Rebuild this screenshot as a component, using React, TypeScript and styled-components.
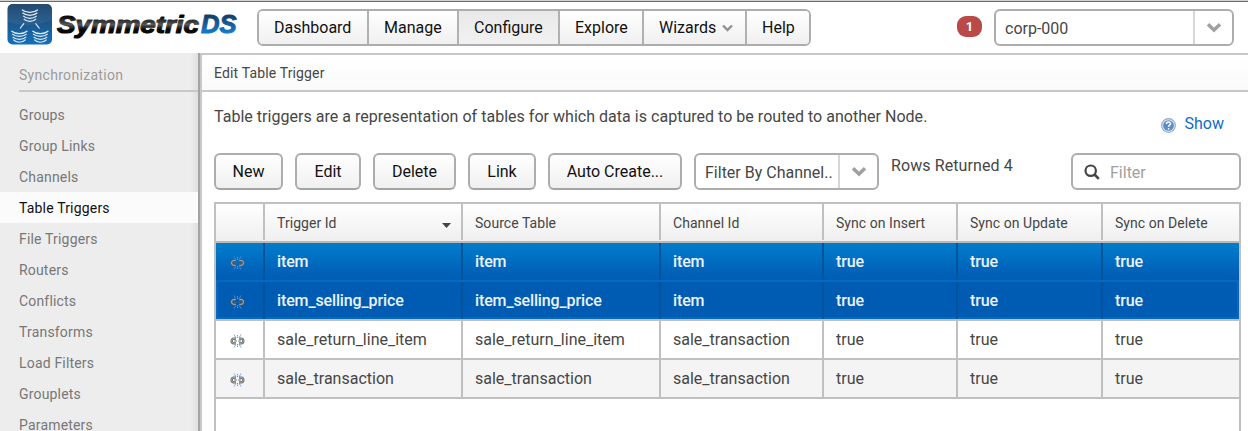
import React from "react";
import styled, { createGlobalStyle, css } from "styled-components";

const GlobalStyle = createGlobalStyle`
  * { box-sizing: border-box; }
  html, body { margin: 0; padding: 0; background: #fff; }
  body {
    font-family: Roboto, "Liberation Sans", sans-serif;
    font-size: 16px;
    color: #464646;
    overflow: hidden;
  }
`;

const Page = styled.div`
  width: 1248px;
  height: 431px;
  display: flex;
  flex-direction: column;
  overflow: hidden;
`;

const TopBar = styled.header`
  flex: none;
  height: 53px;
  display: flex;
  align-items: flex-start;
  padding: 7px 14px 0 7px;
  border-top: 1px solid #d2d2d2;
  box-shadow: inset 0 1px 0 #6c6c6c;
`;

const Logo = styled.svg`
  flex: none;
  display: block;
  width: 236px;
  height: 44px;
  margin: -5px 14px 0 0;
`;

const surface = css`
  border: 2px solid #adadad;
  border-radius: 6px;
  background: #fff;
`;

const Menu = styled.nav`
  ${surface}
  display: flex;
  height: 37px;
  margin-top: 1px;
  overflow: hidden;
`;

const MenuItem = styled.div<{ $width: number; $active?: boolean }>`
  width: ${(p) => p.$width}px;
  display: flex;
  align-items: center;
  padding: 0 0 1px 15px;
  white-space: nowrap;
  color: #111;
  background: ${(p) => (p.$active ? "linear-gradient(#e9e9e9, #f1f1f1)" : "linear-gradient(#fff, #f0f0f0)")};
  & + & { border-left: 2px solid #b1b1b1; }
`;

const MenuArrow = styled.svg`
  width: 11px;
  height: 8px;
  margin: 1px 0 0 6px;
`;

const Badge = styled.span`
  width: 25px;
  height: 21px;
  margin: 8px 12px 0 auto;
  border-radius: 9px;
  background: #b94a48;
  color: #fff;
  font-size: 13px;
  font-weight: 700;
  line-height: 22px;
  text-align: center;
`;

const SelectBox = styled.div<{ $width: number; $top?: number }>`
  ${surface}
  flex: none;
  width: ${(p) => p.$width}px;
  height: 37px;
  margin-top: ${(p) => p.$top || 0}px;
  display: flex;
  overflow: hidden;
`;

const SelectValue = styled.div`
  flex: 1;
  padding: 3px 0 0 9px;
  line-height: 30px;
  white-space: nowrap;
  overflow: hidden;
`;

const SelectButton = styled.div`
  width: 39px;
  border-left: 2px solid #d6d6d6;
  display: flex;
  align-items: center;
  justify-content: center;
`;

const Body = styled.div`
  flex: 1;
  min-height: 0;
  display: flex;
`;

const Sidebar = styled.aside`
  flex: none;
  width: 200px;
  border-right: 2px solid #a3a3a3;
  background: linear-gradient(to right, #ededed 190px, #e0e0e0 198px);
`;

const SideTitle = styled.div`
  height: 39px;
  margin: 0 0 7px 19px;
  padding-top: 6px;
  line-height: 32px;
  font-size: 14px;
  letter-spacing: 0.3px;
  color: #9b9b9b;
  border-bottom: 2px solid #c8c8c8;
`;

const SideItem = styled.div<{ $active?: boolean }>`
  height: 31px;
  padding-left: 19px;
  line-height: 32px;
  font-size: 14px;
  letter-spacing: 0.18px;
  color: ${(p) => (p.$active ? "#111" : "#777")};
  background: ${(p) => (p.$active ? "#fbfbfb" : "transparent")};
`;

const Main = styled.main`
  flex: 1;
  min-width: 0;
  display: flex;
  flex-direction: column;
  border-left: 2px solid #c8c8c8;
`;

const Caption = styled.div`
  flex: none;
  height: 39px;
  padding-left: 12px;
  border-top: 2px solid #c8c8c8;
  border-bottom: 2px solid #c8c8c8;
  background: linear-gradient(#fff, #fafafa);
  font-size: 14px;
  line-height: 36px;
  letter-spacing: 0.15px;
`;

const Content = styled.section`
  flex: 1;
  min-height: 0;
  padding: 0 7px 0 12px;
  display: flex;
  flex-direction: column;
`;

const Intro = styled.div`
  flex: none;
  height: 61px;
  display: flex;
  justify-content: space-between;
  padding: 9px 17px 0 0;
  line-height: 32px;
  letter-spacing: 0.025px;
`;

const HelpLink = styled.a`
  display: flex;
  align-items: center;
  height: 32px;
  margin-top: 7px;
  color: #0f6bc4;
  svg { margin: 3px 8px 0 0; }
`;

const Toolbar = styled.div`
  flex: none;
  height: 49px;
  display: flex;
  align-items: flex-start;
  gap: 12px;
`;

const Button = styled.button<{ $width: number }>`
  ${surface}
  flex: none;
  width: ${(p) => p.$width}px;
  height: 37px;
  padding: 0 0 1px;
  font: inherit;
  color: #111;
  white-space: nowrap;
  background: linear-gradient(#fff, #f0f0f0);
  border-bottom-color: #a4a4a4;
`;

const RowCount = styled.div`
  line-height: 26px;
  letter-spacing: 0.1px;
`;

const SearchField = styled.div`
  ${surface}
  width: 170px;
  height: 37px;
  margin-left: auto;
  padding: 1px 0 0 11px;
  display: flex;
  align-items: center;
  gap: 10px;
  color: #a0a0a0;
  svg { margin-top: -1px; }
`;

const Grid = styled.div`
  flex: 1;
  border: 2px solid #c0c0c0;
  border-bottom: 0;
`;

const columns = "49px 198px 198px 163px 134px 145px 136px";

const HeadRow = styled.div`
  display: grid;
  grid-template-columns: ${columns};
  height: 39px;
  border-bottom: 2px solid #b9b9b9;
  background: linear-gradient(#fff, #efefef);
  font-size: 14px;
`;

const HeadCell = styled.div`
  height: 36px;
  padding: 1px 10px 0 12px;
  display: flex;
  align-items: center;
  justify-content: space-between;
  white-space: nowrap;
  letter-spacing: 0.05px;
  border-right: 2px solid #c0c0c0;
  &:last-child { border-right: 0; }
  svg { margin-top: 6px; }
`;

type RowKind = "first" | "focused" | "plain" | "odd";

const rowStyles: Record<RowKind, ReturnType<typeof css>> = {
  first: css`
    background: linear-gradient(#007dcb, #005bb3) padding-box;
    border-bottom-color: #006bc0;
  `,
  focused: css`
    background: #005bb3;
    box-shadow: inset 2px 0 0 #006bc0, inset -2px 0 0 #006bc0, inset 0 -2px 0 #006bc0;
  `,
  plain: css`background: #fff;`,
  odd: css`background: #f4f4f4;`,
};

const Row = styled.div<{ $kind: RowKind; $selected: boolean }>`
  display: grid;
  grid-template-columns: ${columns};
  height: 39px;
  border-bottom: 2px solid #c0c0c0;
  ${(p) => p.$selected && css`color: #edf4fb; font-weight: 500; letter-spacing: -0.13px;`}
  ${(p) => rowStyles[p.$kind]}
`;

const Cell = styled.div<{ $selected: boolean }>`
  padding-left: 12px;
  line-height: 37px;
  white-space: nowrap;
  border-right: 2px solid ${(p) => (p.$selected ? "#05549b" : "#c0c0c0")};
  &:last-child { border-right: 0; }
`;

const IconCell = styled(Cell)`
  padding: 3px 4px 0 0;
  display: flex;
  align-items: center;
  justify-content: center;
`;

const Chevron = () => (
  <svg width="16" height="11" viewBox="0 0 16 11">
    <path d="M2 2.2 8 8 14 2.2" fill="none" stroke="#a0a0a0" strokeWidth="3.5" />
  </svg>
);

const BrokenLink = () => (
  <svg width="15" height="14" viewBox="0 0 15 14" fill="none">
    <path d="M4 .5 6 4M7.5 1v3M11 .5 9 4M4 13.5 6 10M7.5 13v-3M11 13.5 9 10" stroke="#5f94e6" strokeWidth="1" strokeDasharray="1.4 .5" />
    <path d="M5.9 4.6H4a2.4 2.4 0 0 0 0 4.8h1.9M9.1 4.6H11a2.4 2.4 0 0 1 0 4.8H9.1" stroke="#5c5c5c" strokeWidth="2.2" />
    <path d="M5.7 4.4H4a2.5 2.5 0 0 0 0 5h1.7M9.3 4.4H11a2.5 2.5 0 0 1 0 5H9.3" stroke="#bcbcbc" strokeWidth=".8" />
    <path d="M4.2 7h2.5M8.3 7h2.5" stroke="#5c5c5c" strokeWidth="1.2" />
  </svg>
);

const stack = (x: number, y: number, w: number, step: number) =>
  [0, 1, 2, 3].map((i) => {
    const half = w - i * 0.6;
    const top = y + i * step;
    return <path key={`${x}-${i}`} d={`M${x - half} ${top}C${x - half / 2} ${top + 3.4} ${x + half / 2} ${top + 3.4} ${x + half} ${top}`} />;
  });

const BrandLogo = () => (
  <Logo viewBox="7 3 236 44">
    <defs>
      <linearGradient id="tile" x1="0" y1="0" x2="0" y2="1">
        <stop offset="0" stopColor="#173f68" />
        <stop offset=".45" stopColor="#1d5689" />
        <stop offset="1" stopColor="#1370bb" />
      </linearGradient>
      <linearGradient id="ink" x1="0" y1="0" x2="0" y2="1">
        <stop offset=".2" stopColor="#000" />
        <stop offset=".52" stopColor="#555" />
        <stop offset=".7" stopColor="#080808" />
      </linearGradient>
      <linearGradient id="blue" x1="0" y1="0" x2="0" y2="1">
        <stop offset=".2" stopColor="#163c63" />
        <stop offset=".8" stopColor="#1478c8" />
      </linearGradient>
    </defs>
    <rect x="7.5" y="4" width="44.5" height="40.5" rx="5" fill="url(#tile)" />
    <path d="M8 22Q29 29 52 20V9q0-5-5-5H13Q8 4 8 9Z" fill="#fff" opacity=".06" />
    <g fill="none" stroke="#e4edf5" strokeWidth="1.2">
      {stack(29.9, 9.8, 8, 3)}
      {stack(19.4, 31, 8, 2.9)}
      {stack(40.4, 31, 8, 2.9)}
      <path d="M24 23.3 20 28.5M35.5 23.3 39.5 28.5" />
    </g>
    <g fontFamily="'Liberation Sans', sans-serif" fontWeight="700" fontStyle="italic" strokeLinejoin="round">
      <text x="57" y="32.5" fontSize="24.5" textLength="142" lengthAdjust="spacingAndGlyphs" fill="url(#ink)" stroke="url(#ink)" strokeWidth="1.2">Symmetric</text>
      <text x="201" y="32.5" fontSize="25" textLength="35.5" lengthAdjust="spacingAndGlyphs" fill="url(#blue)" stroke="url(#blue)" strokeWidth="1">DS</text>
    </g>
  </Logo>
);

const menu = [
  { label: "Dashboard", width: 108 },
  { label: "Manage", width: 90 },
  { label: "Configure", width: 101, active: true },
  { label: "Explore", width: 84 },
  { label: "Wizards", width: 103, arrow: true },
  { label: "Help", width: 64 },
];

const sections = [
  "Groups", "Group Links", "Channels", "Table Triggers", "File Triggers", "Routers",
  "Conflicts", "Transforms", "Load Filters", "Grouplets", "Parameters",
];

const actions = [
  { label: "New", width: 69 },
  { label: "Edit", width: 66 },
  { label: "Delete", width: 83 },
  { label: "Link", width: 68 },
  { label: "Auto Create...", width: 134 },
];

const headings = ["Trigger Id", "Source Table", "Channel Id", "Sync on Insert", "Sync on Update", "Sync on Delete"];

const rows: { kind: RowKind; id: string; channel: string }[] = [
  { kind: "first", id: "item", channel: "item" },
  { kind: "focused", id: "item_selling_price", channel: "item" },
  { kind: "plain", id: "sale_return_line_item", channel: "sale_transaction" },
  { kind: "odd", id: "sale_transaction", channel: "sale_transaction" },
];

export default function App() {
  return (
    <Page>
      <GlobalStyle />
      <TopBar>
        <BrandLogo />
        <Menu>
          {menu.map((m) => (
            <MenuItem key={m.label} $width={m.width} $active={m.active}>
              {m.label}
              {m.arrow && (
                <MenuArrow viewBox="0 0 11 8">
                  <path d="M1 1.5 5.5 6 10 1.5" fill="none" stroke="#929292" strokeWidth="2.4" />
                </MenuArrow>
              )}
            </MenuItem>
          ))}
        </Menu>
        <Badge>1</Badge>
        <SelectBox $width={240} $top={1}>
          <SelectValue>corp-000</SelectValue>
          <SelectButton><Chevron /></SelectButton>
        </SelectBox>
      </TopBar>
      <Body>
        <Sidebar>
          <SideTitle>Synchronization</SideTitle>
          {sections.map((s) => (
            <SideItem key={s} $active={s === "Table Triggers"}>{s}</SideItem>
          ))}
        </Sidebar>
        <Main>
          <Caption>Edit Table Trigger</Caption>
          <Content>
            <Intro>
              <span>Table triggers are a representation of tables for which data is captured to be routed to another Node.</span>
              <HelpLink>
                <svg width="15" height="15" viewBox="0 0 14 14">
                  <circle cx="7" cy="7" r="6.4" fill="#dce8f4" stroke="#8aa9ce" />
                  <circle cx="7" cy="7" r="5" fill="#5f8dc2" />
                  <path d="M5.1 5.5C5.1 3.2 9 3.3 8.9 5.4 8.8 6.8 7.1 6.7 7.1 8.2M7.1 9.3v1.4" fill="none" stroke="#fff" strokeWidth="1.4" />
                </svg>
                Show
              </HelpLink>
            </Intro>
            <Toolbar>
              {actions.map((a) => (
                <Button key={a.label} $width={a.width}>{a.label}</Button>
              ))}
              <SelectBox $width={185}>
                <SelectValue>Filter By Channel..</SelectValue>
                <SelectButton><Chevron /></SelectButton>
              </SelectBox>
              <RowCount>Rows Returned 4</RowCount>
              <SearchField>
                <svg width="16" height="16" viewBox="0 0 16 16" fill="none" stroke="#444">
                  <circle cx="6.7" cy="6.7" r="5.2" strokeWidth="2.2" />
                  <path d="m10.5 10.5 4.3 4.3" strokeWidth="2.6" />
                </svg>
                Filter
              </SearchField>
            </Toolbar>
            <Grid>
              <HeadRow>
                <HeadCell />
                {headings.map((h, i) => (
                  <HeadCell key={h}>
                    {h}
                    {i === 0 && <svg width="9" height="5" viewBox="0 0 9 5"><path d="M0 0h9L4.5 5Z" fill="#444" /></svg>}
                  </HeadCell>
                ))}
              </HeadRow>
              {rows.map((r) => {
                const selected = r.kind === "first" || r.kind === "focused";
                return (
                  <Row key={r.id} $kind={r.kind} $selected={selected}>
                    <IconCell $selected={selected}><BrokenLink /></IconCell>
                    {[r.id, r.id, r.channel, "true", "true", "true"].map((value, i) => (
                      <Cell key={i} $selected={selected}>{value}</Cell>
                    ))}
                  </Row>
                );
              })}
            </Grid>
          </Content>
        </Main>
      </Body>
    </Page>
  );
}
